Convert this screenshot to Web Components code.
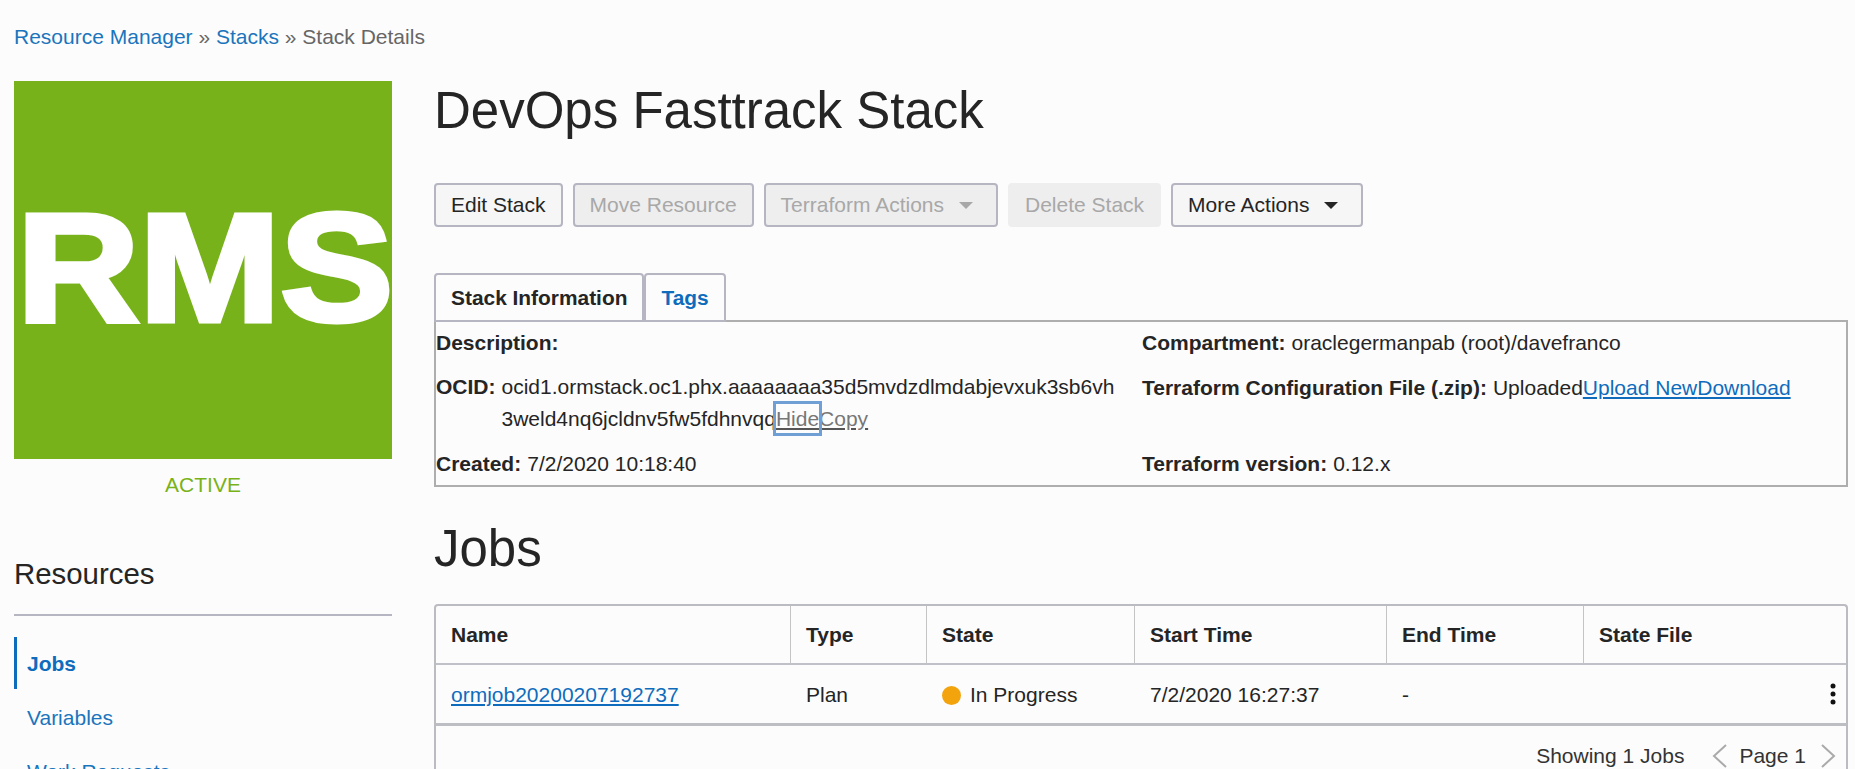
<!DOCTYPE html>
<html>
<head>
<meta charset="utf-8">
<title>Stack Details</title>
<style>
  html, body { margin: 0; height: 769px; overflow: hidden; background: #fcfcfc; }
  body { font: 21px/1.4 "Liberation Sans", Arial, sans-serif; color: #252525; }
  a { color: #0f6cbd; }
  .crumb { color: #1a75bc; text-decoration: none; }
  /* Hide and Copy share one dark underline, the text itself is grey */
  .muted { color: #777; text-decoration-color: #555; }
  .focused { outline: 3px solid #6f9fd4; padding: 3px 0; }
</style>
</head>
<body>
<stack-page>
  <rm-crumbs slot="crumbs"><a class="crumb" href="#">Resource Manager</a> » <a class="crumb" href="#">Stacks</a> » Stack Details</rm-crumbs>

  <rm-logo slot="side" initials="RMS">ACTIVE</rm-logo>
  <rm-side slot="side">
    <span slot="title">Resources</span>
    <rm-side-link active>Jobs</rm-side-link>
    <rm-side-link>Variables</rm-side-link>
    <rm-side-link>Work Requests</rm-side-link>
  </rm-side>

  <rm-heading class="first">DevOps Fasttrack Stack</rm-heading>
  <rm-bar>
    <rm-btn>Edit Stack</rm-btn>
    <rm-btn disabled>Move Resource</rm-btn>
    <rm-btn disabled menu>Terraform Actions</rm-btn>
    <rm-btn disabled plain>Delete Stack</rm-btn>
    <rm-btn menu>More Actions</rm-btn>
  </rm-bar>
  <rm-tabs>
    <rm-tab active>Stack Information</rm-tab>
    <rm-tab>Tags</rm-tab>
  </rm-tabs>
  <rm-info>
    <rm-field slot="left"><span slot="label">Description:</span></rm-field>
    <rm-field slot="left"><span slot="label">OCID:</span><div style="width:618px;word-break:break-all;line-height:32px;margin-bottom:1px;padding-top:1px">ocid1.ormstack.oc1.phx.aaaaaaaa35d5mvdzdlmdabjevxuk3sb6vh3weld4nq6jcldnv5fw5fdhnvqq<a class="muted focused" href="#">Hide</a><a class="muted" href="#">Copy</a></div></rm-field>
    <rm-field slot="left"><span slot="label">Created:</span>7/2/2020 10:18:40</rm-field>
    <rm-field slot="right"><span slot="label">Compartment:</span>oraclegermanpab (root)/davefranco</rm-field>
    <rm-field slot="right" style="height:65px;margin-top:1px"><span slot="label">Terraform Configuration File (.zip):</span>Uploaded<a href="#">Upload New</a><a href="#">Download</a></rm-field>
    <rm-field slot="right"><span slot="label">Terraform version:</span>0.12.x</rm-field>
  </rm-info>
  <rm-heading class="jobs">Jobs</rm-heading>
  <rm-table>
    <rm-th>Name</rm-th><rm-th>Type</rm-th><rm-th>State</rm-th><rm-th>Start Time</rm-th><rm-th>End Time</rm-th><rm-th last>State File</rm-th>
    <rm-td><a href="#">ormjob20200207192737</a></rm-td>
    <rm-td>Plan</rm-td>
    <rm-td><rm-dot></rm-dot>In Progress</rm-td>
    <rm-td>7/2/2020 16:27:37</rm-td>
    <rm-td>-</rm-td>
    <rm-td><rm-kebab></rm-kebab></rm-td>
    <rm-pager slot="foot">Showing 1 Jobs<span slot="page">Page 1</span></rm-pager>
  </rm-table>
</stack-page>

<script>
  // every tag is just css + markup, so one helper stamps them all
  function define(tag, html) {
    customElements.define(tag, class extends HTMLElement {
      constructor() {
        super()
        this.attachShadow({ mode: "open" })
        this.shadowRoot.innerHTML = html
      }
      connectedCallback() {
        const initials = this.shadowRoot.querySelector("[data-initials]")
        if (initials) initials.textContent = this.getAttribute("initials")
      }
    })
  }

  define("stack-page", `
    <style>
      :host { display: grid; grid-template-columns: 434px 1fr; grid-template-rows: 58px auto; }
      .crumbs { grid-column: 1 / 3; }
      .side { padding: 23px 0 0 14px; }
      .main { padding-top: 16px; min-width: 0; }
    </style>
    <div class="crumbs"><slot name="crumbs"></slot></div>
    <div class="side"><slot name="side"></slot></div>
    <div class="main"><slot></slot></div>`)

  define("rm-crumbs", `
    <style>
      :host { display: block; color: #666; font-size: 21px; line-height: 28px; padding: 23px 0 0 14px; }
    </style>
    <slot></slot>`)

  define("rm-logo", `
    <style>
      :host { display: block; width: 378px; }
      .tile { height: 378px; background: #78b21a; overflow: hidden; display: flex; align-items: center; justify-content: center; }
      .mark { display: inline-block; color: #fff; font-size: 154px; font-weight: 700; line-height: 1; -webkit-text-stroke: 5px #fff; transform: translate(2px, -2px) scaleX(1.1); font-kerning: none; white-space: nowrap; }
      .state { text-align: center; color: #78b21a; font-size: 21px; line-height: 28px; margin-top: 12px; }
    </style>
    <div class="tile"><span class="mark" data-initials></span></div>
    <div class="state"><slot></slot></div>`)

  define("rm-side", `
    <style>
      :host { display: block; width: 378px; margin-top: 57px; }
      h2 { margin: 0; font-size: 29.4px; font-weight: 400; line-height: 36px; padding-bottom: 22px; border-bottom: 2px solid #b5b6c1; }
      nav { margin-top: 21px; }
    </style>
    <h2><slot name="title"></slot></h2>
    <nav><slot></slot></nav>`)

  define("rm-side-link", `
    <style>
      :host { display: block; height: 52px; line-height: 53px; margin-bottom: 2px; padding-left: 10px; color: #1a75bc; font-size: 21px; border-left: 3px solid transparent; }
      :host([active]) { border-left-color: #0f6cbd; color: #0f6cbd; font-weight: 700; }
    </style>
    <slot></slot>`)

  define("rm-heading", `
    <style>
      :host { display: block; font-size: 51px; line-height: 74px; color: #252525; }
      :host(.jobs) { margin: 25px 0 18px; }
    </style>
    <slot></slot>`)

  define("rm-bar", `
    <style>
      :host { display: flex; gap: 10px; height: 44px; margin-top: 35px; }
    </style>
    <slot></slot>`)

  define("rm-btn", `
    <style>
      :host { display: inline-flex; align-items: center; box-sizing: border-box; height: 44px; padding: 0 15px; border: 2px solid #b5b6c1; border-radius: 4px; background: #f6f6f7; color: #252525; font-size: 21px; white-space: nowrap; }
      :host([disabled]) { background: #eeeeee; color: #a8a8a8; }
      :host([plain]) { border-color: #eeeeee; }
      .caret { display: none; width: 0; height: 0; margin: 0 8px 0 15px; border-style: solid; border-color: currentColor transparent transparent; border-width: 7px 7.5px 0; }
      :host([menu]) .caret { display: inline-block; }
    </style>
    <slot></slot><span class="caret"></span>`)

  define("rm-tabs", `
    <style>
      :host { display: flex; height: 49px; margin: 46px 0 -2px; position: relative; z-index: 1; }
    </style>
    <slot></slot>`)

  define("rm-tab", `
    <style>
      :host { display: flex; align-items: center; box-sizing: border-box; padding: 1px 15px 0; border: 2px solid #b5b6c1; border-radius: 4px 4px 0 0; background: #fcfcfc; font-size: 20.9px; font-weight: 700; color: #0f6cbd; }
      :host([active]) { color: #252525; }
    </style>
    <slot></slot>`)

  define("rm-info", `
    <style>
      :host { display: grid; grid-template-columns: 706px 1fr; box-sizing: border-box; width: 1414px; height: 167px; border: 2px solid #aeaeae; padding-top: 4px; line-height: 33px; }
      .col { display: flex; flex-direction: column; }
    </style>
    <div class="col"><slot name="left"></slot></div>
    <div class="col"><slot name="right"></slot></div>`)

  define("rm-field", `
    <style>
      :host { display: flex; gap: 6px; margin-bottom: 11px; }
      b { white-space: nowrap; }
      .v { flex: 1; min-width: 0; }
    </style>
    <b><slot name="label"></slot></b>
    <div class="v"><slot></slot></div>`)

  define("rm-table", `
    <style>
      :host { display: block; box-sizing: border-box; width: 1414px; height: 170px; border: 2px solid #bbbbc2; border-bottom: 0; border-radius: 4px 4px 0 0; }
      .grid { display: grid; grid-template-columns: 355px 136px 208px 252px 197px 1fr; }
    </style>
    <div class="grid"><slot></slot></div>
    <slot name="foot"></slot>`)

  define("rm-th", `
    <style>
      :host { display: flex; align-items: center; box-sizing: border-box; height: 59px; padding-left: 15px; font-weight: 700; border-right: 1px solid #c4c4c4; border-bottom: 2px solid #c0c0c8; }
      :host([last]) { border-right: 0; }
    </style>
    <slot></slot>`)

  define("rm-td", `
    <style>
      :host { display: flex; align-items: center; box-sizing: border-box; height: 61px; padding: 2px 0 0 15px; border-bottom: 3px solid #bdbdc4; position: relative; }
    </style>
    <slot></slot>`)

  define("rm-dot", `
    <style>
      :host { display: inline-block; width: 19px; height: 19px; border-radius: 50%; background: #f3a30c; margin-right: 9px; }
    </style>`)

  define("rm-kebab", `
    <style>
      :host { position: absolute; right: 9px; top: 17px; display: block; }
      svg { display: block; }
    </style>
    <svg width="8" height="24" viewBox="0 0 8 24"><circle cx="4" cy="4" r="2.5" fill="#111"/><circle cx="4" cy="12" r="2.5" fill="#111"/><circle cx="4" cy="20" r="2.5" fill="#111"/></svg>`)

  define("rm-pager", `
    <style>
      :host { display: flex; justify-content: flex-end; align-items: center; height: 60px; padding-right: 10px; color: #333; }
      .count { margin-right: 28px; }
      .page { margin: 0 15px 0 12px; }
      svg { display: block; }
    </style>
    <span class="count"><slot></slot></span>
    <svg width="15" height="24" viewBox="0 0 15 24"><path d="M14 1 L2 12 L14 23" fill="none" stroke="#aaaaaa" stroke-width="2"/></svg>
    <span class="page"><slot name="page"></slot></span>
    <svg width="15" height="24" viewBox="0 0 15 24"><path d="M1 1 L13 12 L1 23" fill="none" stroke="#aaaaaa" stroke-width="2"/></svg>`)
</script>
</body>
</html>
